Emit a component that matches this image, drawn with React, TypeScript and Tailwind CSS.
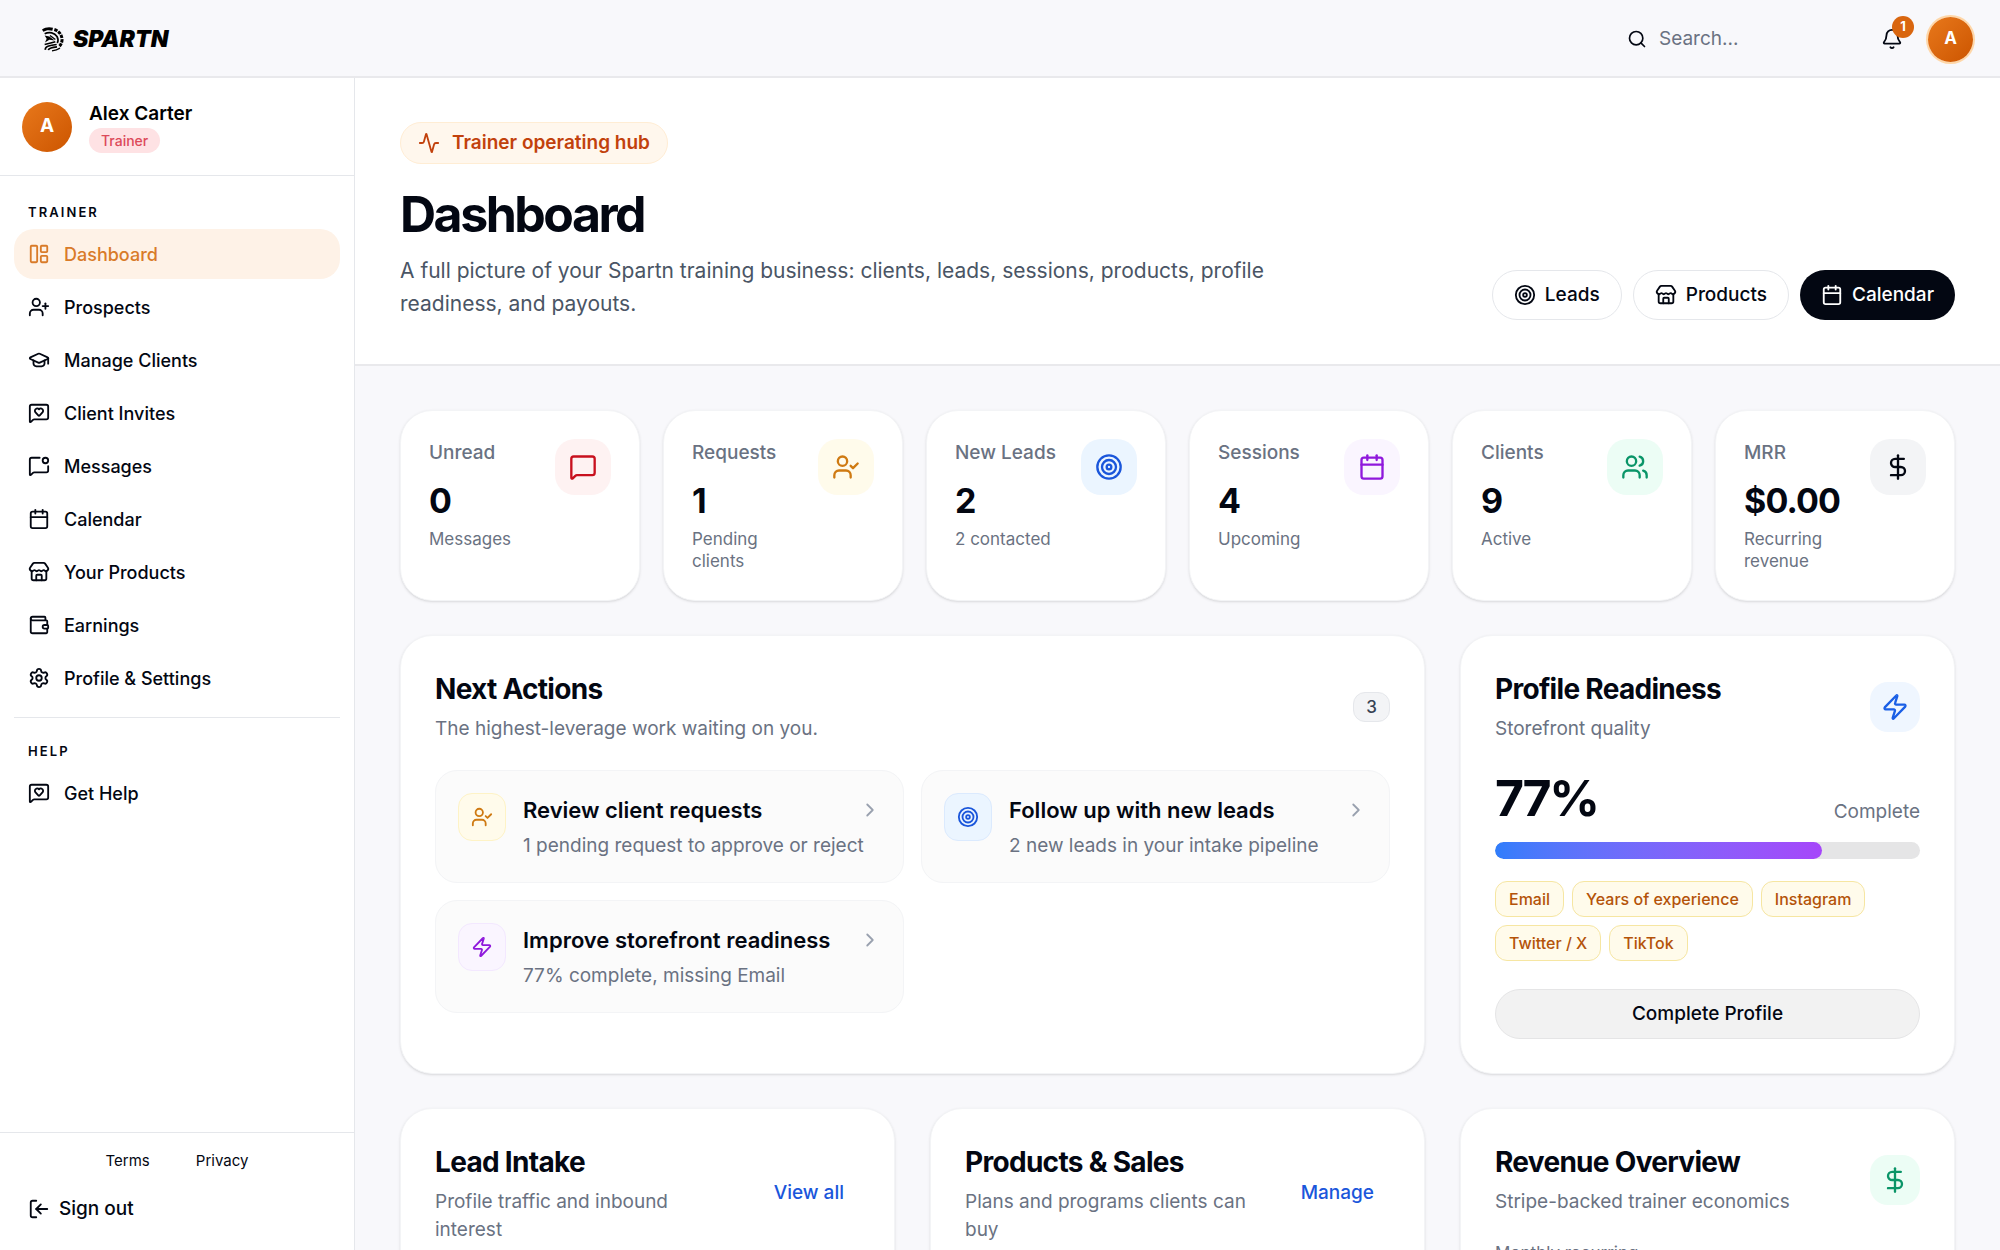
import {
    Activity,
    Bell,
    Calendar,
    ChevronRight,
    DollarSign,
    GraduationCap,
    LayoutPanelLeft,
    LogIn,
    MessageSquare,
    MessageSquareDot,
    MessageSquareHeart,
    Search,
    Settings,
    Store,
    Target,
    UserCheck,
    UserPlus,
    Users,
    Wallet,
    Zap,
} from "lucide-react";
import type { ReactNode } from "react";

const navItems = [
    { label: "Dashboard", icon: LayoutPanelLeft, active: true },
    { label: "Prospects", icon: UserPlus },
    { label: "Manage Clients", icon: GraduationCap },
    { label: "Client Invites", icon: MessageSquareHeart },
    { label: "Messages", icon: MessageSquareDot },
    { label: "Calendar", icon: Calendar },
    { label: "Your Products", icon: Store },
    { label: "Earnings", icon: Wallet },
    { label: "Profile & Settings", icon: Settings },
];

const stats = [
    { label: "Unread", value: "0", sub: "Messages", icon: MessageSquare, tone: "bg-red-50 text-[#c8101e]" },
    { label: "Requests", value: "1", sub: "Pending clients", icon: UserCheck, tone: "bg-amber-50 text-[#cf7a12]" },
    { label: "New Leads", value: "2", sub: "2 contacted", icon: Target, tone: "bg-[#ebf5ff] text-[#1a56db]" },
    { label: "Sessions", value: "4", sub: "Upcoming", icon: Calendar, tone: "bg-purple-50 text-[#8f18dc]" },
    { label: "Clients", value: "9", sub: "Active", icon: Users, tone: "bg-emerald-50 text-[#0a9568]" },
    { label: "MRR", value: "$0.00", sub: "Recurring revenue", icon: DollarSign, tone: "bg-gray-100 text-gray-950" },
];

const actions = [
    {
        title: "Review client requests",
        desc: "1 pending request to approve or reject",
        icon: UserCheck,
        tone: "bg-amber-50 border-amber-100 text-[#cf7a12]",
    },
    {
        title: "Follow up with new leads",
        desc: "2 new leads in your intake pipeline",
        icon: Target,
        tone: "bg-[#ebf5ff] border-blue-100 text-[#1a56db]",
    },
    {
        title: "Improve storefront readiness",
        desc: "77% complete, missing Email",
        icon: Zap,
        tone: "bg-purple-50 border-purple-100 text-[#8f18dc]",
    },
];

const missing = ["Email", "Years of experience", "Instagram", "Twitter / X", "TikTok"];
const readiness = 77;

function Logo() {
    return (
        <a href="#" className="flex items-center gap-[9px] text-black">
            <svg viewBox="0 0 66 74" className="h-[25px] w-[22px]" fill="none" stroke="currentColor">
                {/* crest */}
                <path d="M0 7 C10 0 22 -1 33 2 L31 11 C21 8 12 9 4 14 Z" fill="currentColor" stroke="none" />
                <path d="M37 7 C52 12 61 25 60 40 C59 48 56 54 50 59" strokeWidth="9" strokeDasharray="10 3" />
                {/* helmet */}
                <path d="M8 20 C22 13 38 17 45 28 C49 35 49 42 46 48" strokeWidth="5" />
                <path d="M8 25 L22 28 L38 40 L22 38 L9 46 L14 35 Z" fill="currentColor" stroke="none" />
                <path d="M24 25 L40 37" strokeWidth="4" />
                <path d="M8 52 C18 50 28 48 40 44" strokeWidth="5" />
                <path d="M10 68 C9 58 16 56 44 52" strokeWidth="5" />
                <path d="M19 69 C20 63 26 61 45 59" strokeWidth="5" />
                <path d="M30 71 C38 70 46 68 54 63" strokeWidth="4" />
            </svg>
            <span className="text-[23px] leading-7 font-black italic">SPARTN</span>
        </a>
    );
}

function NavItem({ label, icon: Icon, active }: { label: string; icon: typeof Bell; active?: boolean }) {
    return (
        <li>
            <a
                href="#"
                className={`flex h-[50px] items-center gap-[14px] rounded-[20px] px-[14px] text-[18px] font-medium ${active ? "bg-[#fef2e7] text-[#d97b29]" : "text-gray-950 hover:bg-gray-50"}`}
            >
                <Icon size={22} />
                {label}
            </a>
        </li>
    );
}

function NavHeading({ children }: { children: ReactNode }) {
    return <h2 className="mb-[7px] px-[14px] text-[13px] leading-5 font-semibold tracking-[0.16em]">{children}</h2>;
}

function Sidebar() {
    return (
        <aside className="flex w-[355px] shrink-0 flex-col border-r border-gray-200 bg-white">
            <div className="flex h-[98px] items-center gap-[17px] border-b border-gray-200 px-[22px]">
                <div className="flex size-[50px] items-center justify-center rounded-full bg-linear-to-br from-[#e8781a] to-[#cc5500] text-[19px] font-bold text-white">
                    A
                </div>
                <div>
                    <p className="text-[19px] leading-7 font-semibold text-black">Alex Carter</p>
                    <span className="block w-fit rounded-full bg-[#fee2e4] px-3 text-[14px] leading-[25px] font-medium text-[#dc4a5a]">
                        Trainer
                    </span>
                </div>
            </div>

            <nav className="flex-1 px-[14px] pt-[26px]">
                <NavHeading>TRAINER</NavHeading>
                <ul className="flex flex-col gap-[3px]">
                    {navItems.map((item) => (
                        <NavItem key={item.label} {...item} />
                    ))}
                </ul>
                <hr className="mt-[14px] mb-[23px] border-gray-200" />
                <NavHeading>HELP</NavHeading>
                <ul>
                    <NavItem label="Get Help" icon={MessageSquareHeart} />
                </ul>
            </nav>

            <div className="border-t border-gray-200 pt-4 pb-4">
                <div className="flex justify-center gap-[46px] text-[15px] leading-6">
                    <a href="#">Terms</a>
                    <a href="#">Privacy</a>
                </div>
                <button className="mt-[11px] flex h-[50px] items-center gap-[9px] px-7 text-[19px] font-medium">
                    <LogIn size={22} className="-scale-x-100" />
                    Sign out
                </button>
            </div>
        </aside>
    );
}

function Card({ className, children }: { className?: string; children: ReactNode }) {
    return (
        <section className={`rounded-[32px] border border-gray-100 bg-white shadow-sm ${className ?? ""}`}>
            {children}
        </section>
    );
}

function CardHeader({ title, desc, children }: { title: string; desc: string; children: ReactNode }) {
    return (
        <div className="mb-[27px] flex items-center justify-between gap-6">
            <div>
                <h2 className="text-[28px] leading-[38px] font-bold tracking-tight text-gray-950">{title}</h2>
                <p className="mt-[7px] text-[19px] leading-7 text-gray-500">{desc}</p>
            </div>
            {children}
        </div>
    );
}

export default function App() {
    return (
        <div className="flex h-screen flex-col overflow-hidden bg-[#f8f8fb] font-[Inter,sans-serif] text-gray-950">
            <header className="flex h-[78px] shrink-0 items-center justify-between border-b-2 border-[#e9e9ec] pt-0.5 pr-[27px] pl-[42px]">
                <Logo />
                <div className="flex items-center">
                    <label className="mr-[30px] flex items-center gap-3">
                        <Search size={20} />
                        <input
                            type="search"
                            aria-label="Search"
                            placeholder="Search..."
                            className="w-48 bg-transparent text-[19px] outline-none placeholder:text-gray-500"
                        />
                    </label>
                    <button aria-label="Notifications" className="relative mr-[25px]">
                        <Bell size={22} />
                        <span className="absolute -top-3 left-[11px] flex size-[22px] items-center justify-center rounded-full bg-[#d9660f] text-[13px] font-bold text-white">
                            1
                        </span>
                    </button>
                    <button className="flex size-[45px] items-center justify-center rounded-full bg-linear-to-br from-[#e8781a] to-[#cc5500] text-[17px] font-bold text-white ring-2 ring-orange-200">
                        A
                    </button>
                </div>
            </header>

            <div className="flex min-h-0 flex-1">
                <Sidebar />

                <main className="min-w-0 flex-1 overflow-hidden">
                    {/* Hero */}
                    <div className="flex items-end justify-between gap-8 border-b-2 border-[#e9e9ec] bg-white px-[45px] py-[44px]">
                        <div>
                            <span className="flex h-[42px] w-fit items-center gap-3 rounded-full border border-orange-100 bg-orange-50 px-[17px] text-[19px] font-semibold text-[#c2410c]">
                                <Activity size={22} />
                                Trainer operating hub
                            </span>
                            <h1 className="mt-[22px] text-[50px] leading-[56px] font-bold tracking-tighter">Dashboard</h1>
                            <p className="mt-3 max-w-[930px] text-[21px] leading-[33px] text-gray-600">
                                A full picture of your Spartn training business: clients, leads, sessions, products, profile readiness, and payouts.
                            </p>
                        </div>
                        <div className="flex shrink-0 gap-[11px] text-[19px] font-medium">
                            <button className="flex h-[50px] items-center gap-[9px] rounded-full border border-gray-200 bg-white px-[21px]">
                                <Target size={22} />
                                Leads
                            </button>
                            <button className="flex h-[50px] items-center gap-[9px] rounded-full border border-gray-200 bg-white px-[21px]">
                                <Store size={22} />
                                Products
                            </button>
                            <button className="flex h-[50px] items-center gap-[9px] rounded-full bg-gray-950 px-[21px] text-white">
                                <Calendar size={22} />
                                Calendar
                            </button>
                        </div>
                    </div>

                    <div className="flex flex-col gap-[34px] px-[45px] py-[44px]">
                        {/* Stats */}
                        <div className="grid grid-cols-6 gap-[23px]">
                            {stats.map((s) => (
                                <Card key={s.label} className="flex items-start justify-between p-7">
                                    <div>
                                        <p className="text-[19px] leading-7 font-medium whitespace-nowrap text-gray-500">{s.label}</p>
                                        <p className="mt-3 text-[34px] leading-[44px] font-bold tracking-tight">{s.value}</p>
                                        <p className="mt-[5px] max-w-[110px] text-[17px] leading-[22px] text-gray-500">{s.sub}</p>
                                    </div>
                                    <div className={`flex size-14 shrink-0 items-center justify-center rounded-[20px] ${s.tone}`}>
                                        <s.icon size={28} />
                                    </div>
                                </Card>
                            ))}
                        </div>

                        <div className="grid grid-cols-3 gap-[35px]">
                            <Card className="col-span-2 p-[34px]">
                                <CardHeader title="Next Actions" desc="The highest-leverage work waiting on you.">
                                    <span className="rounded-xl border border-gray-200 bg-gray-100 px-3 text-[17px] leading-7 font-medium text-gray-700">
                                        3
                                    </span>
                                </CardHeader>
                                <div className="grid grid-cols-2 gap-[17px]">
                                    {actions.map((a) => (
                                        <a
                                            key={a.title}
                                            href="#"
                                            className="flex items-start gap-[17px] rounded-[22px] border border-gray-100 bg-[#fbfbfb] p-[22px]"
                                        >
                                            <div className={`flex size-12 shrink-0 items-center justify-center rounded-[14px] border ${a.tone}`}>
                                                <a.icon size={22} />
                                            </div>
                                            <div className="flex-1">
                                                <h3 className="flex items-center justify-between text-[22px] leading-[34px] font-semibold">
                                                    {a.title}
                                                    <ChevronRight size={22} className="text-gray-400" />
                                                </h3>
                                                <p className="mt-[5px] text-[19px] leading-7 text-gray-500">{a.desc}</p>
                                            </div>
                                        </a>
                                    ))}
                                </div>
                            </Card>

                            <Card className="p-[34px]">
                                <CardHeader title="Profile Readiness" desc="Storefront quality">
                                    <div className="flex size-[50px] items-center justify-center rounded-[18px] bg-blue-50 text-[#1a5fe6]">
                                        <Zap size={28} />
                                    </div>
                                </CardHeader>
                                <div className="flex items-end justify-between">
                                    <p className="text-[50px] leading-[56px] font-bold tracking-tighter">{readiness}%</p>
                                    <p className="text-[19px] leading-7 text-gray-500">Complete</p>
                                </div>
                                <div className="mt-4 h-[17px] overflow-hidden rounded-full bg-[#e5e5e6]">
                                    <div
                                        className="h-full rounded-full bg-linear-to-r from-[#2f7dfb] to-[#a646fa]"
                                        style={{ width: `${readiness}%` }}
                                    />
                                </div>
                                <div className="mt-[22px] flex flex-wrap gap-2">
                                    {missing.map((m) => (
                                        <span
                                            key={m}
                                            className="rounded-xl border border-[#f6e6a2] bg-amber-50 px-[13px] text-[16px] leading-[34px] font-medium text-[#b45309]"
                                        >
                                            {m}
                                        </span>
                                    ))}
                                </div>
                                <button className="mt-7 h-[50px] w-full rounded-full border border-[#e5e5e6] bg-[#f2f2f2] text-[19px] font-medium">
                                    Complete Profile
                                </button>
                            </Card>
                        </div>

                        <div className="grid grid-cols-3 gap-[35px]">
                            <Card className="p-[34px]">
                                <CardHeader title="Lead Intake" desc="Profile traffic and inbound interest">
                                    <a href="#" className="shrink-0 px-4 text-[19px] font-medium text-[#1a56db]">
                                        View all
                                    </a>
                                </CardHeader>
                            </Card>
                            <Card className="p-[34px]">
                                <CardHeader title="Products & Sales" desc="Plans and programs clients can buy">
                                    <a href="#" className="shrink-0 px-4 text-[19px] font-medium text-[#1a56db]">
                                        Manage
                                    </a>
                                </CardHeader>
                            </Card>
                            <Card className="p-[34px]">
                                <CardHeader title="Revenue Overview" desc="Stripe-backed trainer economics">
                                    <div className="flex size-[50px] items-center justify-center rounded-[18px] bg-emerald-50 text-[#0a9568]">
                                        <DollarSign size={28} />
                                    </div>
                                </CardHeader>
                                <p className="text-[17px] leading-5 text-gray-500">Monthly recurring</p>
                            </Card>
                        </div>
                    </div>
                </main>
            </div>
        </div>
    );
}
